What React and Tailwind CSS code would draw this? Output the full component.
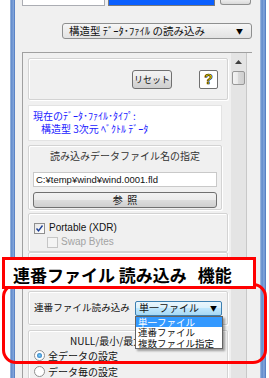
import React from 'react';

const jp = "font-['Noto_Sans_CJK_JP',sans-serif]";
const lat = "font-['Liberation_Sans','Noto_Sans_CJK_JP',sans-serif]";

function Frame({ className }) {
  return (
    <div className={`h-full bg-[linear-gradient(to_right,#a9c1e2,#5f89cb,#86a8dc,#4874bd)] ${className}`} />
  );
}

function Group({ className, children }) {
  return (
    <div className={`border border-[#d3d3d3] rounded-[2px] shadow-[inset_1px_1px_0_#fff,1px_1px_0_#fff] ${className}`}>
      {children}
    </div>
  );
}

export default function App() {
  return (
    <div className={`relative w-[269px] h-[378px] overflow-hidden bg-white flex ${jp}`}>
      <div className="w-[10px] h-full bg-white" />
      <Frame className="w-[5px]" />

      {/* main window area */}
      <div className="w-[245px] h-full bg-[#f0f0f0] flex flex-col">
        {/* cut-off controls at the top */}
        <div className="flex h-[6px] shrink-0">
          <div className="ml-[7px] w-[83px] h-full bg-white border-x border-b border-[#abadb3]" />
          <div className="ml-[3px] w-[107px] h-full bg-[#0a5fff] border-x border-b border-[#7a7a7a]" />
          <div className="ml-[5px] w-[31px] h-[5px] rounded-b-[3px] border-x border-b border-[#8e8f8f] bg-[linear-gradient(#ececec,#d9d9d9)]" />
        </div>

        {/* data type select */}
        <div className="mt-[17px] ml-[47px] w-[190px] h-[16px] shrink-0 rounded-[3px] border border-[#8e8f8f] bg-[linear-gradient(#f6f6f6,#e2e2e2)] flex items-center pl-[6px] pr-[8px]">
          <span className="text-[10.5px] leading-none text-[#111] whitespace-nowrap">構造型 ﾃﾞｰﾀ･ﾌｧｲﾙ の読み込み</span>
          <span className="ml-auto text-[7px] leading-none text-black">▼</span>
        </div>

        {/* scroll panel */}
        <div className="mt-[13px] ml-[7px] w-[230px] flex-1 border-t border-l border-[#a0a0a0] flex">
          <div className="w-[206px] pl-[5px] flex flex-col">
            {/* reset / help */}
            <Group className="mt-[5px] w-[200px] h-[42px] shrink-0 flex items-center justify-end pr-[9px]">
              <div className="w-[40px] h-[19px] rounded-[3px] border border-[#707070] bg-[linear-gradient(#f2f2f2,#ebebeb_50%,#dddddd_50%,#cfcfcf)] flex items-center justify-center text-[9px] leading-none text-[#111] whitespace-nowrap">
                リセット
              </div>
              <div className="ml-[27px] w-[19px] h-[19px] rounded-[2px] border border-[#707070] bg-white flex items-center justify-center">
                <span className={`${lat} text-[14px] font-bold leading-none text-[#ffe000] [-webkit-text-stroke:0.6px_#000]`}>?</span>
              </div>
            </Group>

            {/* current data type */}
            <div className="mt-[5px] w-[194px] h-[36px] shrink-0 bg-white border border-[#e3e3e3] px-[4px] pt-[3px] text-[10px] leading-[13px] text-[#1a1aff] whitespace-nowrap">
              <div>現在のﾃﾞｰﾀ･ﾌｧｲﾙ･ﾀｲﾌﾟ:</div>
              <div className="pl-[8px]">構造型 3次元 ﾍﾞｸﾄﾙ ﾃﾞｰﾀ</div>
            </div>

            {/* file name */}
            <Group className="mt-[4px] w-[194px] h-[65px] shrink-0 flex flex-col items-center">
              <div className="mt-[4px] text-[10px] leading-[12px] text-[#333] whitespace-nowrap">読み込みデータファイル名の指定</div>
              <div className={`mt-[10px] w-[184px] h-[15px] bg-white border border-[#c9c9c9] flex items-center px-[2px] ${lat} text-[9.5px] leading-none text-[#111] whitespace-nowrap`}>
                C:¥temp¥wind¥wind.0001.fld
              </div>
              <div className="mt-[5px] w-[184px] h-[16px] rounded-[3px] border border-[#707070] bg-[linear-gradient(#f2f2f2,#ebebeb_50%,#dddddd_50%,#cfcfcf)] flex items-center justify-center text-[10px] leading-none text-[#111]">
                参&nbsp;&nbsp;照
              </div>
            </Group>

            {/* portable */}
            <Group className="mt-[3px] w-[200px] h-[39px] shrink-0 pl-[5px] pt-[8px]">
              <div className="flex items-center h-[12px]">
                <div className="w-[11px] h-[11px] border border-[#8f8f8f] bg-[linear-gradient(135deg,#e6e6e6,#fff)] flex items-center justify-center">
                  <svg width="9" height="9" viewBox="0 0 9 9">
                    <path d="M1.5 4.5 L3.5 6.8 L7.5 1.5" fill="none" stroke="#1c3f95" strokeWidth="1.4" />
                  </svg>
                </div>
                <span className={`ml-[4px] ${lat} text-[10px] leading-none text-[#111]`}>Portable (XDR)</span>
              </div>
              <div className="flex items-center h-[12px] mt-[2px] ml-[13px]">
                <div className="w-[11px] h-[11px] border border-[#c5c5c5] bg-[#f4f4f4]" />
                <span className={`ml-[3px] ${lat} text-[10px] leading-none text-[#a3a3a3]`}>Swap Bytes</span>
              </div>
            </Group>

            <Group className="w-[200px] h-[37px] shrink-0" />

            {/* sequential file select */}
            <Group className="mt-[2px] w-[200px] h-[34px] shrink-0 flex items-center pl-[5px]">
              <span className="text-[9.6px] leading-none text-[#111] whitespace-nowrap">連番ファイル読み込み</span>
              <div className="ml-[5px] w-[87px] h-[15px] border border-[#3c7fb1] rounded-[2px] bg-[linear-gradient(#eaf6fd,#d9f0fc_50%,#bee6fd_50%,#a7d9f5)] flex items-center pl-[3px] pr-[4px]">
                <span className="text-[10px] leading-none text-[#111]">単一ファイル</span>
                <span className="ml-auto text-[7px] leading-none text-black">▼</span>
              </div>
            </Group>

            {/* null settings */}
            <Group className="mt-[5px] w-[200px] h-[60px] shrink-0 flex flex-col">
              <div className="mt-[4px] pl-[41px] text-[10px] leading-[12px] text-[#111] whitespace-nowrap">NULL/最小/最大値の設定</div>
              <div className="mt-[2px] ml-[5px] flex items-center h-[13px]">
                <div className="w-[11px] h-[11px] rounded-full border border-[#8f8f8f] bg-white flex items-center justify-center">
                  <div className="w-[5px] h-[5px] rounded-full bg-[radial-gradient(circle,#7fd0f5,#1a66b8)]" />
                </div>
                <span className="ml-[3px] text-[10px] leading-none text-[#111]">全データの設定</span>
              </div>
              <div className="mt-[3px] ml-[5px] flex items-center h-[13px]">
                <div className="w-[11px] h-[11px] rounded-full border border-[#8f8f8f] bg-white" />
                <span className="ml-[3px] text-[10px] leading-none text-[#111]">データ毎の設定</span>
              </div>
            </Group>
          </div>

          {/* scrollbar */}
          <div className="ml-[2px] w-[16px] h-full bg-[#e4e4e4] border-r border-[#c8c8c8] flex flex-col items-center">
            <div className="mt-[5px] h-[8px] flex items-center justify-center">
              <svg width="7" height="4" viewBox="0 0 7 4"><path d="M0 4 L3.5 0 L7 4 Z" fill="#404040" /></svg>
            </div>
            <div className="mt-[5px] w-[13px] h-[14px] rounded-[2px] border border-[#979797] bg-[linear-gradient(to_right,#f3f3f3,#e8e8e8_50%,#d8d8d8_50%,#cfcfcf)]" />
          </div>
        </div>
      </div>

      <Frame className="w-[6px]" />
      <div className="flex-1 h-full bg-white" />

      {/* annotation: rounded frame */}
      <div className="absolute left-[2px] top-[283px] w-[265px] h-[81px] rounded-[14px] border-[3px] border-[#ff0000]" />

      {/* annotation: label */}
      <div className="absolute left-[2px] top-[257px] w-[254px] h-[32px] border-[3px] border-[#ff0000] bg-white flex items-center pl-[8px] pt-[3px]">
        <span className="text-[17px] font-bold leading-none text-black whitespace-nowrap">
          連番ファイル 読み込み<span className="ml-[11px]">機能</span>
        </span>
      </div>

      {/* open dropdown list */}
      <div className="absolute left-[135px] top-[316px] w-[88px] h-[33px] bg-white border border-[#646464] shadow-[2px_2px_2px_rgba(0,0,0,0.35)] flex flex-col text-[9.5px] leading-[10.3px] text-[#111]">
        <div className="bg-[#3399ff] text-white px-[2px]">単一ファイル</div>
        <div className="px-[2px]">連番ファイル</div>
        <div className="px-[2px] whitespace-nowrap">複数ファイル指定</div>
      </div>
    </div>
  );
}
